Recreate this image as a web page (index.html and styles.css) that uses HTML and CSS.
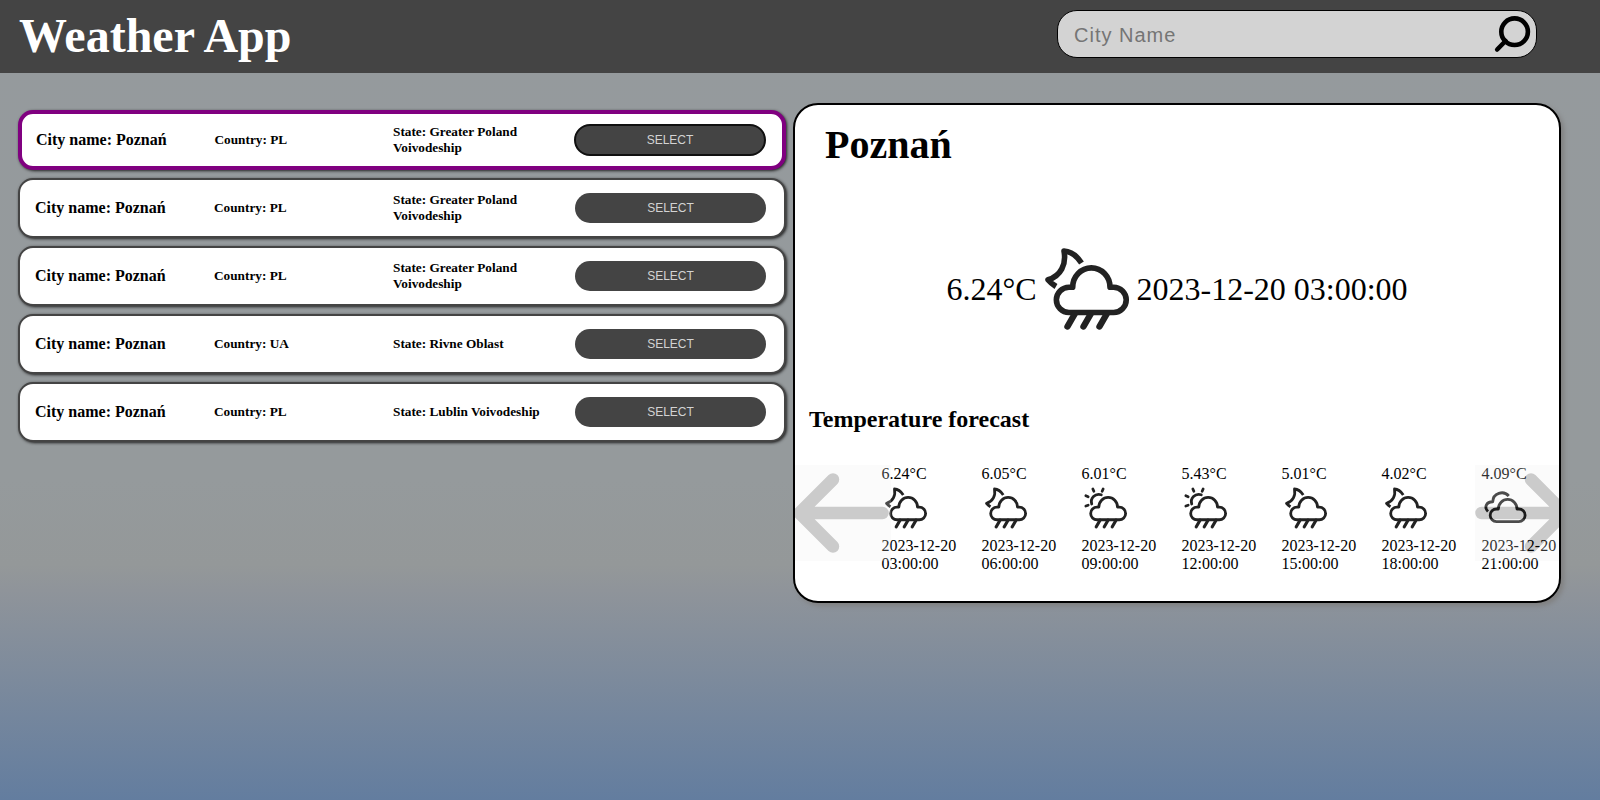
FILE: index.html
```html
<!DOCTYPE html>
<html lang="en">
<head>
<meta charset="utf-8">
<title>Weather App</title>
<link rel="stylesheet" href="styles.css">
</head>
<body>
<svg class="defs" width="0" height="0">
  <symbol id="rain-cloud" viewBox="0 0 100 100">
    <path d="M32 73.500 H76.600 A12.650 12.650 0 0 0 76.600 48.200 H73 A18.650 19.300 0 0 0 35.700 48.200 H32 A12.650 12.650 0 0 0 32 73.500 Z"/>
    <path class="drops" d="M38 74.500 L30.500 87.500 M54 74.500 L46.500 87.500 M70 74.500 L62.500 87.500"/>
  </symbol>
  <symbol id="night-rain" viewBox="0 0 100 100">
    <use href="#rain-cloud"/>
    <path class="butt" d="M44.500 24 C40 17 34 12.300 27 12 C29.500 25 24 37 11 40.800 Q14 44.500 19 47.500"/>
  </symbol>
  <symbol id="day-rain" viewBox="0 0 100 100">
    <use href="#rain-cloud"/>
    <path d="M21.500 42 C18 30 28 20 40.500 23.500 M23.700 12 L25.700 16.500 M44.300 12 L42.300 16.500 M9.700 25.500 L14.300 27.500 M9.700 46 L14.300 44.500"/>
  </symbol>
  <symbol id="clouds" viewBox="0 0 100 100">
    <path d="M31 77.300 H75.600 A12.650 12.650 0 0 0 75.600 52 H72 A18.650 19.300 0 0 0 34.700 52 H31 A12.650 12.650 0 0 0 31 77.300 Z"/>
    <path class="butt" d="M14 57 C6 49 10 37.500 23.500 37.500 C24 20 45 14 55.500 26"/>
  </symbol>
</svg>
<header class="header">
  <h1 class="title">Weather App</h1>
  <form class="search">
    <input class="search-input" type="text" placeholder="City Name">
    <svg class="search-icon" viewBox="0 0 40 40"><circle cx="22.600" cy="17.700" r="13.300"/><path d="M13.500 27 L5.200 35.500"/></svg>
  </form>
</header>
<main class="main">
  <section class="cities">
    <article class="city selected"><h4>City name: Poznań</h4><h5>Country: PL</h5><h5>State: Greater Poland Voivodeship</h5><button>SELECT</button></article>
    <article class="city"><h4>City name: Poznań</h4><h5>Country: PL</h5><h5>State: Greater Poland Voivodeship</h5><button>SELECT</button></article>
    <article class="city"><h4>City name: Poznań</h4><h5>Country: PL</h5><h5>State: Greater Poland Voivodeship</h5><button>SELECT</button></article>
    <article class="city"><h4>City name: Poznan</h4><h5>Country: UA</h5><h5>State: Rivne Oblast</h5><button>SELECT</button></article>
    <article class="city"><h4>City name: Poznań</h4><h5>Country: PL</h5><h5>State: Lublin Voivodeship</h5><button>SELECT</button></article>
  </section>
  <section class="panel">
    <h1 class="place">Poznań</h1>
    <div class="current">
      <span>6.24°C</span>
      <svg class="icon icon-large"><use href="#night-rain"/></svg>
      <span>2023-12-20 03:00:00</span>
    </div>
    <h2 class="forecast-title">Temperature forecast</h2>
    <div class="forecast">
      <div class="slot"><span>6.24°C</span><svg class="icon"><use href="#night-rain"/></svg><span>2023-12-20 03:00:00</span></div>
      <div class="slot"><span>6.05°C</span><svg class="icon"><use href="#night-rain"/></svg><span>2023-12-20 06:00:00</span></div>
      <div class="slot"><span>6.01°C</span><svg class="icon"><use href="#day-rain"/></svg><span>2023-12-20 09:00:00</span></div>
      <div class="slot"><span>5.43°C</span><svg class="icon"><use href="#day-rain"/></svg><span>2023-12-20 12:00:00</span></div>
      <div class="slot"><span>5.01°C</span><svg class="icon"><use href="#night-rain"/></svg><span>2023-12-20 15:00:00</span></div>
      <div class="slot"><span>4.02°C</span><svg class="icon"><use href="#night-rain"/></svg><span>2023-12-20 18:00:00</span></div>
      <div class="slot"><span>4.09°C</span><svg class="icon"><use href="#clouds"/></svg><span>2023-12-20 21:00:00</span></div>
      <svg class="arrow arrow-left" viewBox="0 0 96 96"><path d="M87.500 48 H7 M38 14.500 L4.500 48 L38 81.500"/></svg>
      <svg class="arrow arrow-right" viewBox="0 0 96 96"><path d="M6.500 48 H87 M56 14.500 L89.500 48 L56 81.500"/></svg>
    </div>
  </section>
</main>
</body>
</html>
```
FILE: styles.css
```css
* { box-sizing: border-box; }
body {
  margin: 0;
  height: 800px;
  overflow: hidden;
  font-family: "Liberation Serif", serif;
  color: #000;
  background: linear-gradient(#959a9d 0, #959a9c 480px, #949899 565px, #8f949a 590px, #637d9f 800px);
}
h1, h2, h4, h5 { margin: 0; }
.defs { position: absolute; }
.header {
  display: flex;
  justify-content: space-between;
  height: 73px;
  padding: 8px 63px 0 19px;
  background: #444;
}
.title { font-size: 48px; line-height: 55px; color: #fff; }
.search {
  display: flex;
  align-items: center;
  width: 480px;
  height: 48px;
  margin-top: 2px;
  padding: 0 4px 0 16px;
  border: 1px solid #000;
  border-radius: 20px;
  background: lightgray;
}
.search-input {
  flex: 1;
  padding: 2px 0 0;
  border: 0;
  outline: 0;
  background: transparent;
  font: 20px "Liberation Sans", sans-serif;
  letter-spacing: 1px;
}
.search-icon { width: 40px; height: 40px; fill: none; stroke: #000; stroke-width: 4.600; stroke-linecap: round; }
.main { display: flex; gap: 7px; padding: 30px 0 0 18px; }
.cities { display: flex; flex-direction: column; gap: 8px; width: 768px; padding-top: 7px; }
.city {
  display: grid;
  grid-template-columns: 179px 179px 182px 191px;
  align-items: center;
  height: 60px;
  padding-left: 15px;
  border: 2px solid #444;
  border-radius: 15px;
  background: #fff;
  box-shadow: 1px 1px 3px #222;
}
.city.selected { border: 4px solid purple; padding-left: 14px; grid-template-columns: 178.500px 178.500px 181px 192px; }
.city h4 { font-size: 16px; }
.city h5 { font-size: 13.280px; line-height: 16px; padding-right: 20px; }
.city button {
  height: 30px;
  padding: 0;
  border: 0;
  border-radius: 15px;
  background: #444;
  color: lightgray;
  font: 12px "Liberation Sans", sans-serif;
}
.city.selected button { height: 32px; border: 2px solid #101010; border-radius: 16px; }
.panel {
  width: 768px;
  height: 500px;
  border: 2px solid #000;
  border-radius: 25px;
  background: #fff;
  overflow: hidden;
  box-shadow: 3px 3px 5px #808080;
}
.place { padding: 17px 0 0 30px; font-size: 40px; line-height: 46px; }
.current { display: flex; justify-content: center; align-items: center; height: 242px; font-size: 32px; }
.icon { display: block; width: 50px; height: 50px; fill: none; stroke: #222; stroke-width: 5.600; stroke-linecap: round; stroke-linejoin: round; }
.butt { stroke-linecap: butt; }
.drops { stroke-width: 6.400; }
.icon-large { width: 100px; height: 100px; }
.forecast-title { margin-top: -5px; padding-left: 14px; font-size: 24px; line-height: 28px; }
.forecast { position: relative; display: flex; height: 130px; margin-top: 25px; padding: 7px 0 0 86.500px; }
.slot { flex: none; width: 100px; padding-right: 20px; font-size: 16px; line-height: 18px; }
.slot > span { display: block; }
.slot .icon { margin: 0 0 4px -.5px; }
.arrow {
  position: absolute;
  top: 7px;
  width: 96px;
  height: 96px;
  background: #f0f0f0;
  opacity: .2;
  fill: none;
  stroke: #000;
  stroke-width: 12.500;
  stroke-linecap: round;
  stroke-linejoin: round;
}
.arrow-left { left: 0; }
.arrow-right { left: 680px; }
```
